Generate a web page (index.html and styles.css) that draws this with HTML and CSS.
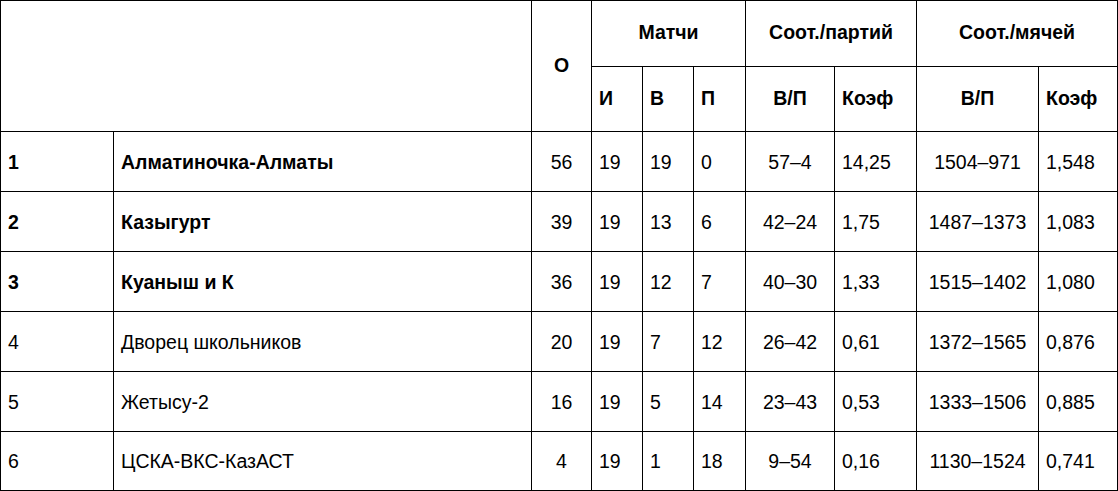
FILE: index.html
```html
<!DOCTYPE html>
<html lang="ru">
<head>
<meta charset="utf-8">
<link rel="stylesheet" href="styles.css">
</head>
<body>
<table class="standings">
  <colgroup>
    <col class="c-pos"><col class="c-team"><col class="c-pts">
    <col class="c-m"><col class="c-m"><col class="c-m2">
    <col class="c-sp"><col class="c-kp"><col class="c-sb"><col class="c-kb">
  </colgroup>
  <thead>
    <tr class="h1">
      <th colspan="2" rowspan="2"></th>
      <th rowspan="2" class="ctr">О</th>
      <th colspan="3" class="ctr">Матчи</th>
      <th colspan="2" class="ctr">Соот./партий</th>
      <th colspan="2" class="ctr">Соот./мячей</th>
    </tr>
    <tr class="h2">
      <th>И</th><th>В</th><th>П</th>
      <th class="ctr">В/П</th><th>Коэф</th>
      <th class="ctr">В/П</th><th>Коэф</th>
    </tr>
  </thead>
  <tbody>
    <tr class="top"><td>1</td><td>Алматиночка-Алматы</td><td class="ctr">56</td><td>19</td><td>19</td><td>0</td><td class="ctr">57–4</td><td>14,25</td><td class="ctr">1504–971</td><td>1,548</td></tr>
    <tr class="top"><td>2</td><td>Казыгурт</td><td class="ctr">39</td><td>19</td><td>13</td><td>6</td><td class="ctr">42–24</td><td>1,75</td><td class="ctr">1487–1373</td><td>1,083</td></tr>
    <tr class="top"><td>3</td><td>Куаныш и К</td><td class="ctr">36</td><td>19</td><td>12</td><td>7</td><td class="ctr">40–30</td><td>1,33</td><td class="ctr">1515–1402</td><td>1,080</td></tr>
    <tr><td>4</td><td>Дворец школьников</td><td class="ctr">20</td><td>19</td><td>7</td><td>12</td><td class="ctr">26–42</td><td>0,61</td><td class="ctr">1372–1565</td><td>0,876</td></tr>
    <tr><td>5</td><td>Жетысу-2</td><td class="ctr">16</td><td>19</td><td>5</td><td>14</td><td class="ctr">23–43</td><td>0,53</td><td class="ctr">1333–1506</td><td>0,885</td></tr>
    <tr class="last"><td>6</td><td>ЦСКА-ВКС-КазАСТ</td><td class="ctr">4</td><td>19</td><td>1</td><td>18</td><td class="ctr">9–54</td><td>0,16</td><td class="ctr">1130–1524</td><td>0,741</td></tr>
  </tbody>
</table>
</body>
</html>
```
FILE: styles.css
```css
html, body {
  margin: 0;
  padding: 0;
  background: #fff;
}
.standings {
  border-collapse: collapse;
  table-layout: fixed;
  width: 1118px;
  font-family: "Liberation Sans", Arial, sans-serif;
  font-size: 19.5px;
  color: #000;
}
.c-pos { width: 113px; }
.c-team { width: 418px; }
.c-pts { width: 60px; }
.c-m { width: 51px; }
.c-m2 { width: 52px; }
.c-sp { width: 89px; }
.c-kp { width: 82px; }
.c-sb { width: 122px; }
.c-kb { width: 79px; }
.standings th,
.standings td {
  border: 1px solid #000;
  padding: 0 0 0 7px;
  text-align: left;
  vertical-align: middle;
  line-height: 22px;
  white-space: nowrap;
  overflow: hidden;
}
.standings th {
  font-weight: bold;
  padding-bottom: 3px;
}
.standings .ctr { text-align: center; padding-left: 0; }
.h1 { height: 66px; }
.h2 { height: 65px; }
tbody tr { height: 60px; }
tbody tr.last { height: 59px; }
tr.top td:nth-child(1),
tr.top td:nth-child(2) { font-weight: bold; }
```
